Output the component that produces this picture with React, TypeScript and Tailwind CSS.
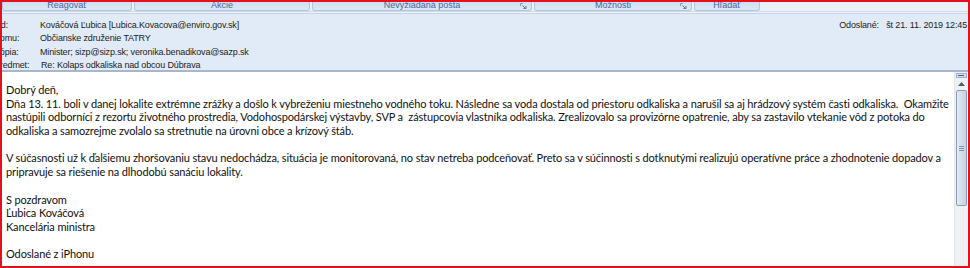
import React from "react";

const tabs = [
  { label: "Reagovať", w: "w-[130px]", launcher: false },
  { label: "Akcie", w: "w-[176px]", launcher: false },
  { label: "Nevyžiadaná pošta", w: "w-[220px]", launcher: true },
  { label: "Možnosti", w: "w-[158px]", launcher: true },
  { label: "Hľadať", w: "w-[66px]", launcher: false },
];

const headerRows = [
  { label: "Od:", value: "Kováčová Ľubica [Lubica.Kovacova@enviro.gov.sk]" },
  { label: "Komu:", value: "Občianske združenie TATRY" },
  { label: "Kópia:", value: "Minister; sizp@sizp.sk; veronika.benadikova@sazp.sk" },
  { label: "Predmet:", value: "Re: Kolaps odkaliska nad obcou Dúbrava", shift: true },
];

const bodyLines = [
  "Dobrý deň,",
  "Dňa 13. 11. boli v danej lokalite extrémne zrážky a došlo k vybreženiu miestneho vodného toku. Následne sa voda dostala od priestoru odkaliska a narušil sa aj hrádzový systém časti odkaliska.  Okamžite",
  "nastúpili odborníci z rezortu životného prostredia, Vodohospodárskej výstavby, SVP a  zástupcovia vlastníka odkaliska. Zrealizovalo sa provizórne opatrenie, aby sa zastavilo vtekanie vôd z potoka do",
  "odkaliska a samozrejme zvolalo sa stretnutie na úrovni obce a krízový štáb.",
  "",
  "V súčasnosti už k ďalšiemu zhoršovaniu stavu nedochádza, situácia je monitorovaná, no stav netreba podceňovať. Preto sa v súčinnosti s dotknutými realizujú operatívne práce a zhodnotenie dopadov a",
  "pripravuje sa riešenie na dlhodobú sanáciu lokality.",
  "",
  "S pozdravom",
  "Ľubica Kováčová",
  "Kancelária ministra",
  "",
  "Odoslané z iPhonu",
];

function Launcher() {
  return (
    <svg width="7" height="6" viewBox="0 0 7 6" className="shrink-0">
      <path d="M0.5 0.5 H3 M0.5 0.5 V3" stroke="#8a9cb8" strokeWidth="1" fill="none" />
      <path d="M2.5 2.5 L5.5 5.5 M3.5 5.5 H6 V3" stroke="#5d7498" strokeWidth="1" fill="none" />
    </svg>
  );
}

function Scrollbar() {
  return (
    <div className="w-[13px] shrink-0 flex flex-col items-center bg-[#eef0f4] border-l border-[#e3e7ee]">
      <div className="w-[11px] h-[5px] mt-[1px] bg-[#d7e1ee] border border-[#9fb0c8] flex items-center justify-center">
        <div className="w-[6px] h-[1px] bg-[#3f5f8f]" />
      </div>
      <div className="h-[12px] flex items-center justify-center">
        <svg width="7" height="4" viewBox="0 0 7 4">
          <path d="M0 4 L3.5 0 L7 4 Z" fill="#4d5a6b" />
        </svg>
      </div>
      <div className="w-[11px] h-[116px] rounded-[2px] border border-[#8d9bb0] bg-gradient-to-r from-[#e6ebf3] via-[#d4dcea] to-[#c7d2e3] flex items-center justify-center">
        <div className="flex flex-col gap-[1px]">
          <div className="w-[5px] h-[1px] bg-[#8593a8]" />
          <div className="w-[5px] h-[1px] bg-[#8593a8]" />
          <div className="w-[5px] h-[1px] bg-[#8593a8]" />
        </div>
      </div>
      <div className="flex-1" />
    </div>
  );
}

export default function App() {
  return (
    <div className="relative w-[970px] h-[268px] overflow-hidden bg-white flex flex-col font-['Liberation_Sans',sans-serif]">
      {/* ribbon tabs (cut at the top) */}
      <div className="h-[12px] flex items-start gap-[2px] pl-[2px] bg-[#eaf1fa] border-b border-[#cddaea]">
        {tabs.map((t) => (
          <div
            key={t.label}
            className={`${t.w} h-[11px] relative flex items-center justify-center rounded-b-[3px] border border-t-0 border-[#b3c6de] bg-gradient-to-b from-[#cbdcf1] to-[#dde8f6] text-[9px] leading-none text-[#4467a0]`}
          >
            <span className="mt-[1px]">{t.label}</span>
            {t.launcher && (
              <div className="absolute right-[4px] top-[3px]">
                <Launcher />
              </div>
            )}
          </div>
        ))}
      </div>
      <div className="h-[1px] bg-[#f1f5fb]" />

      {/* message header */}
      <div className="h-[59px] bg-[#e1ebf7] border-t border-[#c4d3e6] border-b-2 border-b-[#a7b6ca] pt-[5px] text-[9px] tracking-[-0.15px] text-[#1b1b1b] flex">
        <div className="flex-1 flex flex-col">
          {headerRows.map((r) => (
            <div key={r.label} className="h-[13.3px] flex items-center">
              <span className="w-[46px] -ml-[6px] shrink-0">{r.label}</span>
              <span className={r.shift ? "ml-[1px]" : ""}>{r.value}</span>
            </div>
          ))}
        </div>
        <div className="h-[13.3px] flex items-center pr-[3px]">
          <span className="w-[47px]">Odoslané:</span>
          <span>št 21. 11. 2019 12:45</span>
        </div>
      </div>

      {/* message body */}
      <div className="flex-1 flex min-h-0">
        <div className="flex-1 min-w-0 overflow-hidden pl-[6px] pt-[11px] text-[11px] tracking-[-0.13px] leading-[13.7px] text-[#111] font-['Lato',sans-serif] whitespace-pre">
          {bodyLines.map((l, i) => (
            <div key={i} className="h-[13.7px]">
              {l}
            </div>
          ))}
        </div>
        <div className="pr-[3px] flex">
          <Scrollbar />
        </div>
      </div>

      {/* red highlight frame drawn over the screenshot */}
      <div className="absolute inset-0 border-[2px] border-[#e2111b] pointer-events-none" />
    </div>
  );
}
